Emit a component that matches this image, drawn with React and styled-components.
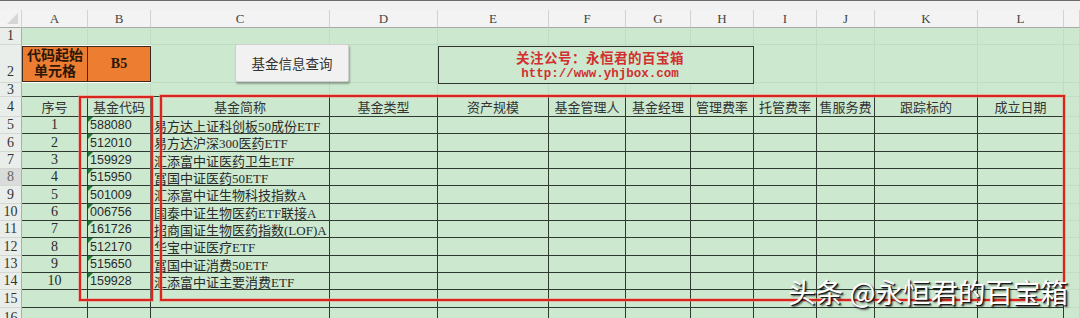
import React from 'react';
import styled, { createGlobalStyle } from 'styled-components';

const GREEN = '#cce8cf';
const FAINT = '#c0dcc3';
const DARK = '#2e3a30';
const SERIF = '"Liberation Serif", "Noto Sans CJK SC", serif';

const colWidths = [22, 66, 63, 179, 108, 111, 77, 65, 63, 63, 58, 103, 86];
const rowHeights = [18, 17, 38, 14, 20, 17, 18, 17, 17, 18, 17, 17, 18, 17, 17, 18, 20];
const letters = ['A', 'B', 'C', 'D', 'E', 'F', 'G', 'H', 'I', 'J', 'K', 'L', ''];

// J4 is too narrow for its title, only the tail of it shows
const headers = [
  '序号', '基金代码', '基金简称', '基金类型', '资产规模', '基金管理人',
  '基金经理', '管理费率', '托管费率', '售服务费', '跟踪标的', '成立日期',
];

const funds = [
  ['1', '588080', '易方达上证科创板50成份ETF'],
  ['2', '512010', '易方达沪深300医药ETF'],
  ['3', '159929', '汇添富中证医药卫生ETF'],
  ['4', '515950', '富国中证医药50ETF'],
  ['5', '501009', '汇添富中证生物科技指数A'],
  ['6', '006756', '国泰中证生物医药ETF联接A'],
  ['7', '161726', '招商国证生物医药指数(LOF)A'],
  ['8', '512170', '华宝中证医疗ETF'],
  ['9', '515650', '富国中证消费50ETF'],
  ['10', '159928', '汇添富中证主要消费ETF'],
];

//--------------------------STYLING-------------------------//
const GlobalStyle = createGlobalStyle`
  body {
    margin: 0;
    background: #ffffff;
    font-family: ${SERIF};
  }
`;

const Page = styled.div`
  position: relative;
  width: 1080px;
  height: 318px;
  overflow: hidden;
`;

const FormulaStrip = styled.div`
  height: 9px;
  background: #f1f1f1;
  border-top: 1px solid #6b6b6b;
`;

const Sheet = styled.div`
  display: grid;
  grid-template-columns: ${colWidths.map(w => w + 'px').join(' ')} 1fr;
  grid-template-rows: ${rowHeights.map(h => h + 'px').join(' ')};
`;

const Corner = styled.div`
  grid-row: 1;
  grid-column: 1;
  background: #f3f3f3;
  border-right: 1px solid #d2d2d2;
  border-bottom: 1px solid #a9a9a9;
  position: relative;
  &::after {
    content: '';
    position: absolute;
    right: 3px;
    bottom: 3px;
    border-left: 11px solid transparent;
    border-bottom: 11px solid #d6d6d6;
  }
`;

const ColHead = styled.div`
  grid-row: 1;
  grid-column: ${p => p.$c};
  background: #f3f3f3;
  border-right: 1px solid #d2d2d2;
  border-bottom: 1px solid #a9a9a9;
  display: flex;
  align-items: center;
  justify-content: center;
  font-size: 13px;
  color: #444;
`;

const RowHead = styled.div`
  grid-row: ${p => p.$r};
  grid-column: 1;
  background: ${p => (p.$active ? '#d9dcd9' : '#eaeeea')};
  border-right: 1px solid #adadad;
  border-bottom: 1px solid #d3d8d3;
  display: flex;
  align-items: ${p => (p.$bottom ? 'flex-end' : 'center')};
  justify-content: center;
  font-size: 14px;
  line-height: 1;
  padding-bottom: ${p => (p.$bottom ? '3px' : '0')};
  color: ${p => (p.$active ? '#666' : '#333')};
`;

const Cell = styled.div`
  grid-row: ${p => p.$r};
  grid-column: ${p => p.$c};
  background: ${GREEN};
  border-right: 1px solid ${p => (p.$dark ? DARK : FAINT)};
  border-bottom: 1px solid ${p => (p.$darkBottom ? DARK : FAINT)};
  display: flex;
  align-items: center;
  justify-content: flex-start;
  padding-left: 3px;
  overflow: hidden;
  white-space: nowrap;
  font-size: 13px;
  color: #2a2a2a;
  position: relative;
`;

const HeadCell = styled(Cell)`
  padding: 0;
  justify-content: center;
  color: #333;
`;

const IndexCell = styled(Cell)`
  font-size: 14px;
  justify-content: center;
  padding: 0;
`;

const CodeCell = styled(Cell)`
  font-family: "Liberation Sans", Arial, sans-serif;
  font-size: 12.5px;
  padding-left: 2px;
  &::before {
    content: '';
    position: absolute;
    left: 0;
    top: 0;
    border-top: 5px solid #1f7a3a;
    border-right: 5px solid transparent;
  }
`;

const OrangeCell = styled.div`
  grid-row: 3;
  grid-column: ${p => p.$c};
  margin: 1px 0 1px 0;
  background: #ed7d31;
  border: 1px solid #3b2a20;
  border-left-width: ${p => (p.$first ? '1px' : '0')};
  display: flex;
  flex-direction: column;
  align-items: center;
  justify-content: center;
  font-size: 14px;
  font-weight: 700;
  line-height: 16px;
  color: #2b1608;
`;

const QueryButton = styled.button`
  grid-row: 3;
  grid-column: 4 / 6;
  align-self: start;
  margin: -1px 0 0 84px;
  width: 114px;
  height: 38px;
  background: #f1f1f1;
  border: 1px solid #cfcfcf;
  border-radius: 2px;
  box-shadow: 1px 2px 2px rgba(0, 0, 0, 0.3);
  font-family: "Noto Sans CJK SC", sans-serif;
  font-size: 13.5px;
  color: #333;
  z-index: 2;
`;

const InfoBox = styled.div`
  grid-row: 3;
  grid-column: 6 / 10;
  margin: 1px 0 0 0;
  height: 36px;
  border: 1px solid #333;
  background: ${GREEN};
  display: flex;
  flex-direction: column;
  align-items: center;
  justify-content: center;
  color: #d22f2f;
  font-weight: 700;
  z-index: 2;
`;

const InfoTitle = styled.div`
  font-family: "Noto Sans CJK SC", serif;
  font-size: 13.5px;
  line-height: 18px;
  letter-spacing: 0.5px;
  margin-left: 8px;
`;

const InfoLink = styled.div`
  font-family: "Liberation Mono", monospace;
  font-size: 12.5px;
  line-height: 16px;
  margin-left: 8px;
`;

const RedFrame = styled.div`
  grid-row: 5 / 16;
  grid-column: ${p => p.$c};
  margin: ${p => p.$m};
  border: 2px solid #d8261f;
  box-shadow: 0 0 0 1px rgba(240, 140, 130, 0.55), inset 0 0 0 1px rgba(240, 140, 130, 0.45);
  pointer-events: none;
  z-index: 3;
`;

const Watermark = styled.div`
  position: absolute;
  right: 12px;
  top: 275px;
  font-family: "Noto Sans CJK SC", sans-serif;
  font-size: 27.5px;
  line-height: 32px;
  color: #ffffff;
  text-shadow: 1px 1px 0 #1a1a1a, 2px 2px 2px rgba(0, 0, 0, 0.7);
  z-index: 5;
`;

//----------------------------- SHEET --------------------------------//
const sheetRows = rowHeights.length; // grid row 1 = column letters

const App = () => {
  const cells = [];

  for (let r = 2; r <= sheetRows; r++) {
    const rowNo = r - 1;
    cells.push(
      <RowHead key={'rh' + r} $r={r} $bottom={rowNo === 2} $active={rowNo === 8}>
        {rowNo}
      </RowHead>
    );
    for (let c = 2; c <= 14; c++) {
      if (rowNo === 2 && (c === 2 || c === 3)) continue;
      const inTable = rowNo >= 4 && c <= 13;
      const key = r + '-' + c;
      const props = {
        $r: r,
        $c: c,
        $dark: inTable,
        $darkBottom: rowNo >= 3 && c <= 13,
      };
      if (rowNo === 4 && c <= 13) {
        cells.push(<HeadCell key={key} {...props}>{headers[c - 2]}</HeadCell>);
      } else if (rowNo >= 5 && rowNo <= 14 && c <= 4) {
        const f = funds[rowNo - 5];
        if (c === 2) cells.push(<IndexCell key={key} {...props}>{f[0]}</IndexCell>);
        if (c === 3) cells.push(<CodeCell key={key} {...props}>{f[1]}</CodeCell>);
        if (c === 4) cells.push(<Cell key={key} {...props}>{f[2]}</Cell>);
      } else {
        cells.push(<Cell key={key} {...props} />);
      }
    }
  }

  return (
    <Page>
      <GlobalStyle />
      <FormulaStrip />
      <Sheet>
        <Corner />
        {letters.map((l, i) => (
          <ColHead key={'ch' + i} $c={i + 2}>{l}</ColHead>
        ))}
        {cells}

        <OrangeCell $c={2} $first>
          <span>代码起始</span>
          <span>单元格</span>
        </OrangeCell>
        <OrangeCell $c={3}>B5</OrangeCell>

        <QueryButton>基金信息查询</QueryButton>

        <InfoBox>
          <InfoTitle>关注公号：永恒君的百宝箱</InfoTitle>
          <InfoLink>http://www.yhjbox.com</InfoLink>
        </InfoBox>

        <RedFrame $c={3} $m="-1px -2px -11px -9px" />
        <RedFrame $c="4 / 14" $m="-2px -1px -11px 9px" />
      </Sheet>
      <Watermark>头条 @永恒君的百宝箱</Watermark>
    </Page>
  );
};

export default App;
